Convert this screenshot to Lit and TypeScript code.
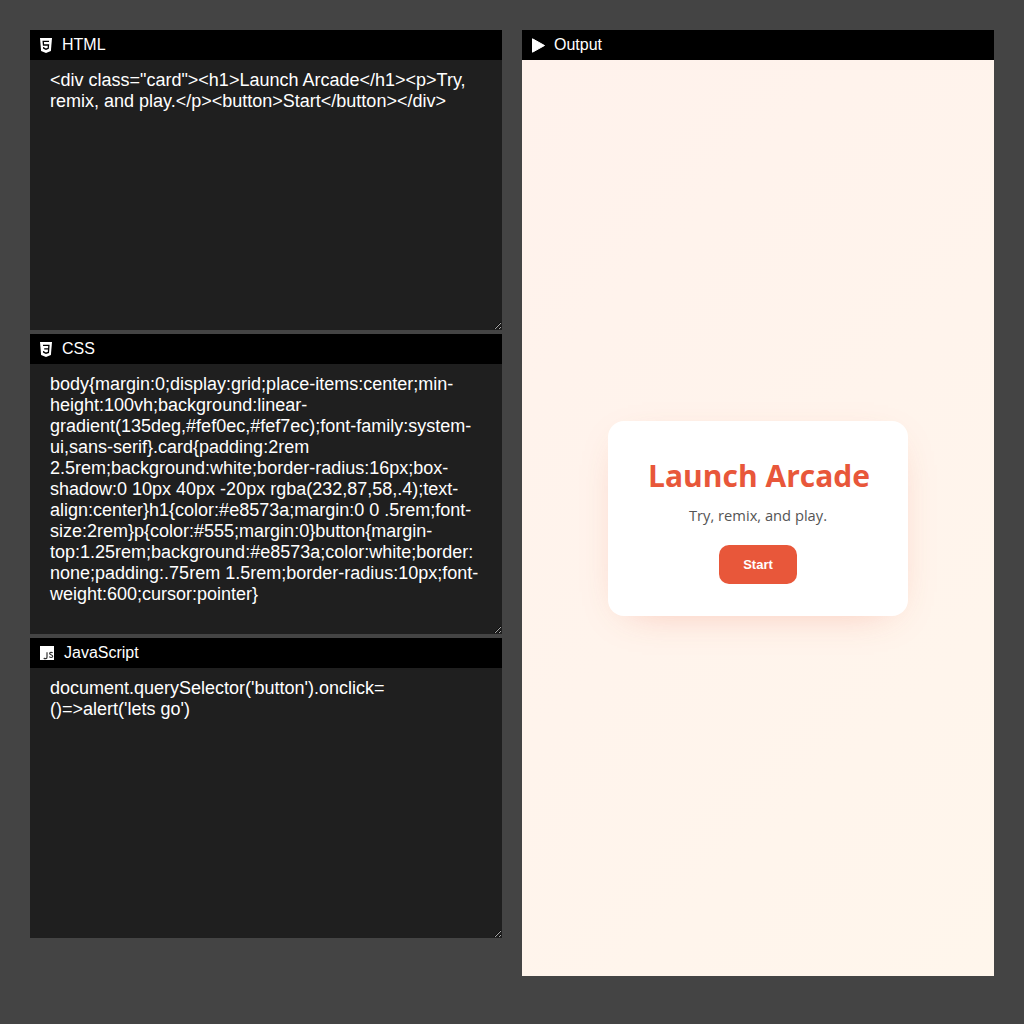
import { LitElement, html, css } from "lit";
import { customElement } from "lit/decorators.js";

const htmlIcon = html`<svg class="icon" viewBox="0 0 12 15"><path fill="#fff" d="M0 0h12l-1.1 13L6 15l-4.9-2z"/><path fill="none" stroke="#000" stroke-width="1.3" d="M9 3.4H3.2l.3 3.6h5l-.3 3.4-2.2.8-2.2-.8-.1-1.4"/></svg>`;
const cssIcon = html`<svg class="icon" viewBox="0 0 12 15"><path fill="#fff" d="M0 0h12l-1.1 13L6 15l-4.9-2z"/><path fill="none" stroke="#000" stroke-width="1.3" d="M3 3.4h5.9l-.2 3.5H4.2M8.7 6.9l-.3 3.5-2.4.8-2.2-.8-.1-1.4"/></svg>`;
const jsIcon = html`<svg class="icon" viewBox="0 0 14 14"><rect width="14" height="14" fill="#fff"/><path fill="none" stroke="#333" stroke-width="1.2" d="M7 6.2v5c0 1.8-2.3 1.9-3.2.8M12.6 7c-.7-1-2.8-1-3 .4-.1 1.7 3.2 1 3.1 2.9-.1 1.5-2.4 1.6-3.4.4"/></svg>`;
const playIcon = html`<svg class="icon play" viewBox="0 0 13 15"><path fill="#fff" stroke="#fff" stroke-width="1" stroke-linejoin="round" d="M.5.8v13.4l12-6.7z"/></svg>`;

@customElement("app-root")
export class AppRoot extends LitElement {
  static styles = css`
    :host {
      display: block;
      box-sizing: border-box;
      width: 1024px;
      height: 1024px;
      background: #444;
      padding: 30px;
      font-family: "Liberation Sans", Arial, sans-serif;
    }
    .layout {
      display: grid;
      grid-template-columns: 472px 472px;
      column-gap: 20px;
      align-items: start;
    }
    .column {
      display: flex;
      flex-direction: column;
      gap: 4px;
    }
    .bar {
      display: flex;
      align-items: center;
      height: 30px;
      padding-left: 10px;
      gap: 10px;
      background: #000;
      color: #fff;
      font-size: 16px;
    }
    .bar.out {
      gap: 9px;
    }
    .icon {
      display: block;
      width: 12px;
      height: 15px;
      flex: none;
    }
    .bar.js .icon {
      width: 14px;
      height: 14px;
    }
    .icon.play {
      width: 13px;
      height: 15px;
    }
    .code {
      box-sizing: border-box;
      height: 270px;
      padding: 10px 20px;
      background: #1f1f1f;
      color: #fff;
      font-size: 18px;
      line-height: 21px;
      white-space: pre-wrap;
      overflow-wrap: break-word;
      overflow: auto;
      resize: vertical;
    }
    .frame {
      display: grid;
      place-items: center;
      height: 916px;
      background: linear-gradient(135deg, #fff2ec, #fff6ec);
    }
    .card {
      padding: 32px 40px;
      background: #fff;
      border-radius: 16px;
      box-shadow: 0 10px 40px -20px rgba(232, 87, 58, 0.4);
      text-align: center;
      width: 300px;
      box-sizing: border-box;
      font-family: "Open Sans", "Noto Sans", sans-serif;
    }
    h1 {
      margin: 0 0 8px;
      padding-top: 2px;
      color: #e8573a;
      font-size: 30px;
      line-height: 41px;
      font-weight: 700;
      white-space: nowrap;
    }
    p {
      margin: 0;
      padding-top: 1px;
      color: #555;
      font-size: 14.7px;
      line-height: 20px;
    }
    button {
      display: block;
      margin: 20px auto 0;
      width: 78px;
      height: 39px;
      padding: 0;
      background: #e8573a;
      color: #fff;
      border: none;
      border-radius: 10px;
      font-family: "Liberation Sans", Arial, sans-serif;
      font-size: 13px;
      font-weight: 700;
      cursor: pointer;
    }
  `;

  render() {
    return html`
      <div class="layout">
        <div class="column">
          <section>
            <div class="bar">${htmlIcon}<span>HTML</span></div>
            <div class="code">&lt;div class="card"&gt;&lt;h1&gt;Launch Arcade&lt;/h1&gt;&lt;p&gt;Try, remix, and play.&lt;/p&gt;&lt;button&gt;Start&lt;/button&gt;&lt;/div&gt;</div>
          </section>
          <section>
            <div class="bar">${cssIcon}<span>CSS</span></div>
            <div class="code">body{margin:0;display:grid;place-items:center;min-height:100vh;background:linear-gradient(135deg,#fef0ec,#fef7ec);font-family:system-ui,sans-serif}.card{padding:2rem 2.5rem;background:white;border-radius:16px;box-shadow:0 10px 40px -20px rgba(232,87,58,.4);text-align:center}h1{color:#e8573a;margin:0 0 .5rem;font-size:2rem}p{color:#555;margin:0}button{margin-top:1.25rem;background:#e8573a;color:white;border:none;padding:.75rem 1.5rem;border-radius:10px;font-weight:600;cursor:pointer}</div>
          </section>
          <section>
            <div class="bar js">${jsIcon}<span>JavaScript</span></div>
            <div class="code">document.querySelector('button').onclick=()=&gt;alert('lets go')</div>
          </section>
        </div>
        <section>
          <div class="bar out">${playIcon}<span>Output</span></div>
          <div class="frame">
            <div class="card">
              <h1>Launch Arcade</h1>
              <p>Try, remix, and play.</p>
              <button>Start</button>
            </div>
          </div>
        </section>
      </div>
    `;
  }
}
